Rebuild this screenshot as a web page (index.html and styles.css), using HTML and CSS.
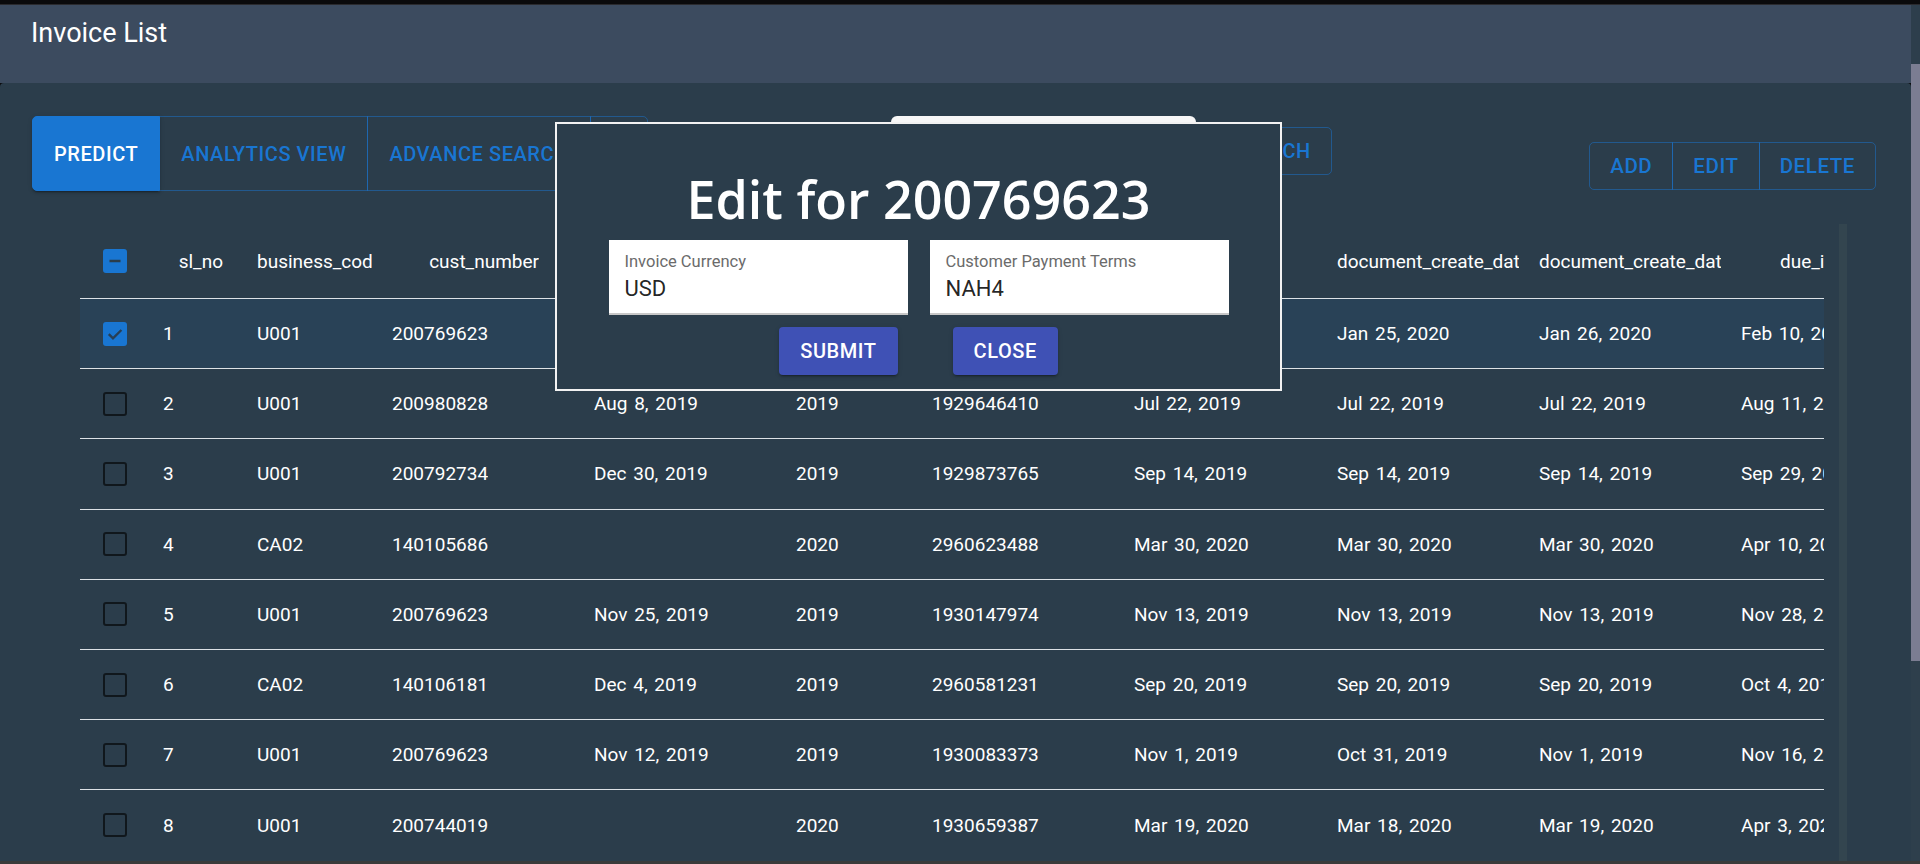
FILE: index.html
```html
<!DOCTYPE html>
<html lang="en">
<head>
<meta charset="utf-8">
<title>Invoice List</title>
<link rel="stylesheet" href="styles.css">
</head>
<body>
<div class="screen">
  <div class="wallpaper"></div>
  <div class="window">
    <div class="app">
      <header class="appbar"><h1 class="app-title">Invoice List</h1></header>
      <main class="paper">
        <div class="toolbar">
          <div class="btn-group left-group">
            <button class="seg seg-filled">Predict</button>
            <button class="seg">Analytics View</button>
            <button class="seg">Advance Search</button>
            <button class="seg seg-icon"></button>
          </div>
          <div class="search-box"></div>
          <button class="outlined search-btn">Search</button>
          <div class="btn-group right-group">
            <button class="seg small">Add</button>
            <button class="seg small">Edit</button>
            <button class="seg small">Delete</button>
          </div>
        </div>
        <div class="grid">
          <div class="viewport">
            <div class="row head">
              <div class="cell"><span class="cb cb-on"><svg width="24" height="24" viewBox="0 0 24 24"><path d="M6.5 12H17.5" stroke="#2b3d4b" stroke-width="2.6" fill="none"/></svg></span></div>
              <div class="cell h-right pr24"><span>sl_no</span></div>
              <div class="cell"><span>business_code</span></div>
              <div class="cell h-right pr45"><span>cust_number</span></div>
              <div class="cell"><span>clear_date</span></div>
              <div class="cell"><span>buisness_year</span></div>
              <div class="cell"><span>doc_id</span></div>
              <div class="cell"><span>posting_date</span></div>
              <div class="cell"><span>document_create_date</span></div>
              <div class="cell"><span>document_create_date.1</span></div>
              <div class="cell pl49"><span>due_in_date</span></div>
            </div>
            <div class="row selected">
              <div class="cell"><span class="cb cb-on"><svg width="24" height="24" viewBox="0 0 24 24"><path d="M5.8 12.2L10 16.4L18.4 8" stroke="#283f55" stroke-width="2.4" fill="none"/></svg></span></div>
              <div class="cell"><span>1</span></div>
              <div class="cell"><span>U001</span></div>
              <div class="cell"><span>200769623</span></div>
              <div class="cell"><span>Feb 11, 2020</span></div>
              <div class="cell"><span>2020</span></div>
              <div class="cell"><span>1930438491</span></div>
              <div class="cell"><span>Jan 26, 2020</span></div>
              <div class="cell"><span>Jan 25, 2020</span></div>
              <div class="cell"><span>Jan 26, 2020</span></div>
              <div class="cell"><span>Feb 10, 2020</span></div>
            </div>
            <div class="row">
              <div class="cell"><span class="cb cb-empty"></span></div>
              <div class="cell"><span>2</span></div>
              <div class="cell"><span>U001</span></div>
              <div class="cell"><span>200980828</span></div>
              <div class="cell"><span>Aug 8, 2019</span></div>
              <div class="cell"><span>2019</span></div>
              <div class="cell"><span>1929646410</span></div>
              <div class="cell"><span>Jul 22, 2019</span></div>
              <div class="cell"><span>Jul 22, 2019</span></div>
              <div class="cell"><span>Jul 22, 2019</span></div>
              <div class="cell"><span>Aug 11, 2019</span></div>
            </div>
            <div class="row">
              <div class="cell"><span class="cb cb-empty"></span></div>
              <div class="cell"><span>3</span></div>
              <div class="cell"><span>U001</span></div>
              <div class="cell"><span>200792734</span></div>
              <div class="cell"><span>Dec 30, 2019</span></div>
              <div class="cell"><span>2019</span></div>
              <div class="cell"><span>1929873765</span></div>
              <div class="cell"><span>Sep 14, 2019</span></div>
              <div class="cell"><span>Sep 14, 2019</span></div>
              <div class="cell"><span>Sep 14, 2019</span></div>
              <div class="cell"><span>Sep 29, 2019</span></div>
            </div>
            <div class="row">
              <div class="cell"><span class="cb cb-empty"></span></div>
              <div class="cell"><span>4</span></div>
              <div class="cell"><span>CA02</span></div>
              <div class="cell"><span>140105686</span></div>
              <div class="cell"><span></span></div>
              <div class="cell"><span>2020</span></div>
              <div class="cell"><span>2960623488</span></div>
              <div class="cell"><span>Mar 30, 2020</span></div>
              <div class="cell"><span>Mar 30, 2020</span></div>
              <div class="cell"><span>Mar 30, 2020</span></div>
              <div class="cell"><span>Apr 10, 2020</span></div>
            </div>
            <div class="row">
              <div class="cell"><span class="cb cb-empty"></span></div>
              <div class="cell"><span>5</span></div>
              <div class="cell"><span>U001</span></div>
              <div class="cell"><span>200769623</span></div>
              <div class="cell"><span>Nov 25, 2019</span></div>
              <div class="cell"><span>2019</span></div>
              <div class="cell"><span>1930147974</span></div>
              <div class="cell"><span>Nov 13, 2019</span></div>
              <div class="cell"><span>Nov 13, 2019</span></div>
              <div class="cell"><span>Nov 13, 2019</span></div>
              <div class="cell"><span>Nov 28, 2019</span></div>
            </div>
            <div class="row">
              <div class="cell"><span class="cb cb-empty"></span></div>
              <div class="cell"><span>6</span></div>
              <div class="cell"><span>CA02</span></div>
              <div class="cell"><span>140106181</span></div>
              <div class="cell"><span>Dec 4, 2019</span></div>
              <div class="cell"><span>2019</span></div>
              <div class="cell"><span>2960581231</span></div>
              <div class="cell"><span>Sep 20, 2019</span></div>
              <div class="cell"><span>Sep 20, 2019</span></div>
              <div class="cell"><span>Sep 20, 2019</span></div>
              <div class="cell"><span>Oct 4, 2019</span></div>
            </div>
            <div class="row">
              <div class="cell"><span class="cb cb-empty"></span></div>
              <div class="cell"><span>7</span></div>
              <div class="cell"><span>U001</span></div>
              <div class="cell"><span>200769623</span></div>
              <div class="cell"><span>Nov 12, 2019</span></div>
              <div class="cell"><span>2019</span></div>
              <div class="cell"><span>1930083373</span></div>
              <div class="cell"><span>Nov 1, 2019</span></div>
              <div class="cell"><span>Oct 31, 2019</span></div>
              <div class="cell"><span>Nov 1, 2019</span></div>
              <div class="cell"><span>Nov 16, 2019</span></div>
            </div>
            <div class="row last">
              <div class="cell"><span class="cb cb-empty"></span></div>
              <div class="cell"><span>8</span></div>
              <div class="cell"><span>U001</span></div>
              <div class="cell"><span>200744019</span></div>
              <div class="cell"><span></span></div>
              <div class="cell"><span>2020</span></div>
              <div class="cell"><span>1930659387</span></div>
              <div class="cell"><span>Mar 19, 2020</span></div>
              <div class="cell"><span>Mar 18, 2020</span></div>
              <div class="cell"><span>Mar 19, 2020</span></div>
              <div class="cell"><span>Apr 3, 2020</span></div>
            </div>
          </div>
          <div class="vtrack"></div>
        </div>
      </main>
    </div>
    <div class="page-scroll">
      <div class="ps-top"></div>
      <div class="ps-thumb"></div>
    </div>
  </div>
  <div class="taskbar"></div>
</div>

<div class="modal">
  <h2 class="modal-title">Edit for 200769623</h2>
  <div class="fields">
    <div class="field">
      <div class="field-label">Invoice Currency</div>
      <div class="field-value">USD</div>
    </div>
    <div class="field">
      <div class="field-label">Customer Payment Terms</div>
      <div class="field-value">NAH4</div>
    </div>
  </div>
  <div class="actions">
    <button class="btn-contained">Submit</button>
    <button class="btn-contained">Close</button>
  </div>
</div>
</body>
</html>
```

FILE: styles.css
```css
* { box-sizing: border-box; }
html, body { margin: 0; padding: 0; }
body {
  width: 1920px;
  height: 864px;
  overflow: hidden;
  position: relative;
  background: #0b0b0d;
  font-family: Roboto, "Liberation Sans", Arial, sans-serif;
}
.screen { display: flex; flex-direction: column; height: 864px; }
.wallpaper { height: 5px; flex: none; background: #0a0a0c; border-bottom: 1px solid #2a2a2e; }
.window { flex: 1; display: flex; min-height: 0; }
.app { flex: 1; display: flex; flex-direction: column; min-width: 0; }
.appbar { height: 78px; flex: none; background: #3c4b5f; padding: 12px 0 0 31px; }
.app-title { margin: 0; font-weight: 400; font-size: 27px; line-height: 32px; color: #fff; }

.paper {
  flex: 1;
  min-height: 0;
  background: #2b3d4b;
  border-radius: 4px 4px 0 0;
  padding: 33px 35px 0 32px;
  display: flex;
  flex-direction: column;
}
.toolbar { display: flex; align-items: flex-start; flex: none; }

.btn-group { display: flex; }
.seg {
  height: 75px;
  padding: 0 21px;
  margin: 0;
  background: transparent;
  border: 1px solid rgba(25, 118, 210, 0.5);
  color: #1976d2;
  font-family: Roboto, "Liberation Sans", Arial, sans-serif;
  font-weight: 500;
  font-size: 20px;
  letter-spacing: 0.57px;
  text-transform: uppercase;
  border-radius: 0;
}
.seg + .seg { margin-left: -1px; }
.seg:first-child { border-radius: 5px 0 0 5px; }
.seg:last-child { border-radius: 0 5px 5px 0; }
.seg-filled {
  background: #1976d2;
  border-color: #1976d2;
  color: #fff;
  position: relative;
  z-index: 1;
  box-shadow: 0 3px 1px -2px rgba(0,0,0,.2), 0 2px 2px 0 rgba(0,0,0,.14), 0 1px 5px 0 rgba(0,0,0,.12);
}
.seg-icon { width: 58px; padding: 0; }
.right-group { margin-left: auto; margin-top: 26px; }
.seg.small { height: 48px; padding: 0 20px; font-size: 20.5px; letter-spacing: 0.58px; }

.search-box {
  width: 305px;
  height: 60px;
  margin-left: 243px;
  background: #f7f7f7;
  border-radius: 6px;
}
.outlined {
  height: 48px;
  margin: 11px 0 0 12px;
  padding: 0 20px 0 22px;
  background: transparent;
  border: 1px solid rgba(25, 118, 210, 0.5);
  border-radius: 5px;
  color: #1976d2;
  font-family: Roboto, "Liberation Sans", Arial, sans-serif;
  font-weight: 500;
  font-size: 20px;
  letter-spacing: 0.57px;
  text-transform: uppercase;
}

.grid { flex: 1; min-height: 0; display: flex; gap: 15px; margin: 33px 29px 0 48px; }
.viewport { flex: 1; min-width: 0; overflow: hidden; }
.vtrack { width: 8px; flex: none; background: #33454f; }

.row {
  display: grid;
  grid-template-columns: 73px 94px 135px 202px 202px 136px 202px 203px 202px 202px 202px;
  width: 1853px;
  height: 70.2px;
  border-bottom: 1px solid #dde2e6;
  color: #fff;
  font-size: 19px;
  word-spacing: 2px;
}
.row.head { height: 75px; word-spacing: 0; }
.row.last { border-bottom: none; }
.row.selected { background: rgba(25, 118, 210, 0.09); }
.cell {
  display: flex;
  align-items: center;
  padding: 0 10px;
  min-width: 0;
  overflow: hidden;
}
.cell > span { overflow: hidden; white-space: nowrap; min-width: 0; }
.h-right { justify-content: flex-end; }
.pr24 { padding-right: 24px; }
.pr45 { padding-right: 45px; }
.pl49 { padding-left: 49px; }

.cell > .cb {
  width: 24px;
  height: 24px;
  flex: none;
  margin-left: 13px;
  border-radius: 3px;
}
.cb-empty { border: 2.5px solid rgba(0, 0, 0, 0.62); }
.cb-on { background: #1976d2; display: flex; }
.cb-on svg { display: block; }

.page-scroll { width: 9px; flex: none; display: flex; flex-direction: column; background: #2e3f4c; }
.ps-top { height: 59px; background: #2d3e4c; }
.ps-thumb { height: 597px; background: #7b7d92; }
.taskbar { height: 3px; flex: none; background: #3a3a3a; }

.modal {
  position: absolute;
  left: 555px;
  top: 122px;
  width: 727px;
  border: 2px solid #f2f2f2;
  background: #2b3d4b;
  padding: 49px 0 14px;
  display: flex;
  flex-direction: column;
  align-items: center;
}
.modal-title {
  margin: 0;
  font-family: "Open Sans", "DejaVu Sans", sans-serif;
  font-weight: 600;
  font-size: 52px;
  line-height: 51px;
  color: #fff;
}
.fields { display: flex; gap: 22px; margin-top: 16px; }
.field {
  width: 299px;
  height: 75px;
  background: #fff;
  border-bottom: 2px solid #c8c8c8;
  padding: 11.5px 16px 0;
}
.field-label { font-size: 16.5px; line-height: 19.8px; color: #6b6b6b; }
.field-value { margin-top: 5px; font-size: 22px; line-height: 26.4px; color: rgba(0, 0, 0, 0.87); }
.actions { display: flex; gap: 55px; margin-top: 12px; }
.btn-contained {
  height: 48px;
  padding: 0 21px;
  background: #3f51b5;
  color: #fff;
  border: none;
  border-radius: 4px;
  font-family: Roboto, "Liberation Sans", Arial, sans-serif;
  font-weight: 500;
  font-size: 20px;
  letter-spacing: 0.57px;
  text-transform: uppercase;
  box-shadow: 0 3px 1px -2px rgba(0,0,0,.2), 0 2px 2px 0 rgba(0,0,0,.14), 0 1px 5px 0 rgba(0,0,0,.12);
}
```
